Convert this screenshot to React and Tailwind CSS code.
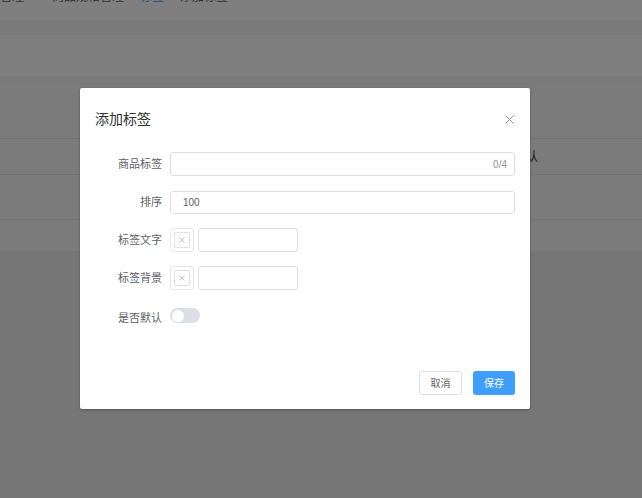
import React, { useState } from "react";

const font = "font-['Liberation_Sans','Noto_Sans_CJK_SC',sans-serif]";

const ColorPicker = () => (
  <div className="flex items-center gap-[4px]">
    <div className="w-[24px] h-[24px] border border-[#e6e6e6] rounded-[3px] p-[3px]">
      <div className="w-full h-full border border-[#e0e0e0] rounded-[2px] flex items-center justify-center">
        <svg width="6" height="6" viewBox="0 0 6 6">
          <path d="M0.5 0.5L5.5 5.5M5.5 0.5L0.5 5.5" stroke="#b4b4b4" strokeWidth="0.8" />
        </svg>
      </div>
    </div>
    <input className="w-[100px] h-[24px] border border-[#dcdfe6] rounded-[3px] outline-none" />
  </div>
);

const Row = ({ label, children, className = "" }) => (
  <div className={`flex items-center ${className}`}>
    <label className="w-[75px] pr-[8px] text-right text-[11px] text-[#606266]">{label}</label>
    <div className="flex-1">{children}</div>
  </div>
);

const App = () => {
  const [on, setOn] = useState(false);

  return (
    <div className={`relative w-[642px] h-[498px] overflow-hidden bg-[#ececed] ${font}`}>
      {/* page under the mask */}
      <div className="h-[20px] bg-white overflow-hidden">
        <div className="-mt-[9px] flex gap-[16px] text-[12px] leading-[12px] text-[#606266]">
          <span>管理</span>
          <span className="ml-[12px]">商品规格管理</span>
          <span className="text-[#409eff]">标签</span>
          <span>添加标签</span>
        </div>
      </div>
      <div className="h-[15px] bg-[#f4f4f5]" />
      <div className="h-[41px] bg-white" />
      <div className="h-[9px] bg-[#f4f4f5]" />
      <div className="bg-[#f7f7f7]">
        <div className="h-[54px] border-b border-[#e2e2e4]" />
        <div className="h-[36px] border-b border-[#e2e2e4] flex items-center justify-end pr-[104px] text-[12px] text-[#303133]">
          默认
        </div>
        <div className="h-[45px] border-b border-[#e2e2e4]" />
        <div className="h-[31px]" />
      </div>

      {/* mask + dialog */}
      <div className="absolute inset-0 bg-black/50">
        <div className="absolute left-[80px] top-[88px] w-[450px] h-[321px] bg-white rounded-[2px] shadow-[0_1px_3px_rgba(0,0,0,0.3)] flex flex-col">
          <div className="flex items-center justify-between pl-[15px] pr-[16px] pt-[15px] h-[48px]">
            <span className="text-[14px] text-[#303133]">添加标签</span>
            <svg width="9" height="9" viewBox="0 0 9 9">
              <path d="M0.5 0.5L8.5 8.5M8.5 0.5L0.5 8.5" stroke="#909399" strokeWidth="1" />
            </svg>
          </div>

          <div className="pl-[15px] pr-[15px] pt-[16px] flex flex-col">
            <Row label="商品标签">
              <div className="h-[24px] border border-[#dcdfe6] rounded-[3px] flex items-center justify-end pr-[7px] text-[10px] text-[#909399]">
                0/4
              </div>
            </Row>
            <Row label="排序" className="mt-[15px]">
              <div className="h-[23px] border border-[#dcdfe6] rounded-[3px] flex items-center pl-[12px] text-[10px] text-[#606266]">
                100
              </div>
            </Row>
            <Row label="标签文字" className="mt-[14px]">
              <ColorPicker />
            </Row>
            <Row label="标签背景" className="mt-[14px]">
              <ColorPicker />
            </Row>
            <Row label="是否默认" className="mt-[16px]">
              <button
                onClick={() => setOn(!on)}
                className={`relative w-[30px] h-[15px] rounded-full ${on ? "bg-[#409eff]" : "bg-[#dcdfe6]"}`}
              >
                <span
                  className={`absolute top-[1.5px] w-[12px] h-[12px] rounded-full bg-white ${on ? "left-[16.5px]" : "left-[1.5px]"}`}
                />
              </button>
            </Row>
          </div>

          <div className="mt-auto pb-[14px] pr-[15px] flex justify-end gap-[11px]">
            <button className="w-[43px] h-[24px] border border-[#dcdfe6] rounded-[3px] bg-white text-[10px] text-[#606266]">
              取消
            </button>
            <button className="w-[42px] h-[24px] rounded-[3px] bg-[#409eff] text-[10px] text-white">
              保存
            </button>
          </div>
        </div>
      </div>
    </div>
  );
};

export default App;
